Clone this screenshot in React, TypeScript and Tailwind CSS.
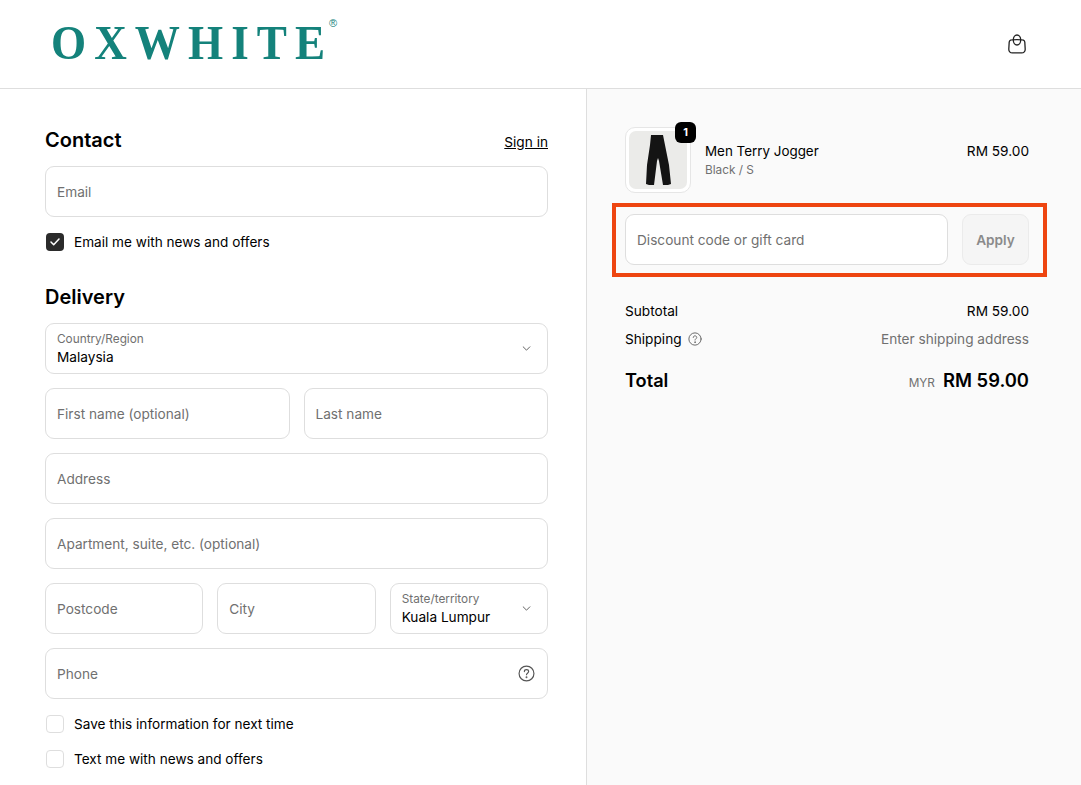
import React from "react";

const Help = ({ size, color }: { size: number; color: string }) => (
  <svg width={size} height={size} viewBox="0 0 16 16" fill="none" stroke={color} strokeWidth="1.1" strokeLinecap="round" strokeLinejoin="round">
    <circle cx="8" cy="8" r="7" />
    <path d="M6 6.2c0-1.1.9-1.8 2-1.8s2 .8 2 1.8c0 1.5-2 1.6-2 3" />
    <circle cx="8" cy="11.6" r="0.35" fill={color} />
  </svg>
);

const Chevron = () => (
  <svg width="9" height="5" viewBox="0 0 10 6" fill="none" stroke="#555" strokeWidth="1.1" strokeLinecap="round" strokeLinejoin="round" className="mr-[1px]">
    <path d="M1 1l4 4 4-4" />
  </svg>
);

const Field = ({ label, className = "", right }: { label: string; className?: string; right?: React.ReactNode }) => (
  <div className={`h-[51px] rounded-[9px] border border-[#dedede] bg-white px-[11px] flex items-center justify-between text-[13.65px] text-[#707070] ${className}`}>
    <span className="pt-[2px]">{label}</span>
    {right}
  </div>
);

const Select = ({ label, value, className = "" }: { label: string; value: string; className?: string }) => (
  <div className={`h-[51px] rounded-[9px] border border-[#dedede] bg-white pl-[11px] pr-[15px] flex items-center justify-between ${className}`}>
    <div className="flex flex-col">
      <span className="text-[11.8px] leading-[16px] text-[#707070]">{label}</span>
      <span className="text-[13.65px] leading-[19px] mt-[1px] text-black">{value}</span>
    </div>
    <Chevron />
  </div>
);

const Check = ({ label, checked = false }: { label: string; checked?: boolean }) => (
  <div className="flex items-center gap-[10px] h-[18px] pl-[1px] text-[13.6px] text-black">
    {checked ? (
      <span className="w-[18px] h-[18px] rounded-[4px] bg-[#2b2b2b] flex items-center justify-center">
        <svg width="10" height="8" viewBox="0 0 10 8" fill="none" stroke="#fff" strokeWidth="1.5" strokeLinecap="round" strokeLinejoin="round">
          <path d="M1 4l2.7 2.7L9 1" />
        </svg>
      </span>
    ) : (
      <span className="w-[18px] h-[18px] rounded-[4px] border border-[#dedede] bg-white" />
    )}
    <span>{label}</span>
  </div>
);

export default function App() {
  return (
    <div className="w-[1081px] h-[785px] overflow-hidden bg-white flex flex-col font-['Inter',sans-serif] text-black">
      <header className="h-[89px] shrink-0 border-b border-[#dedede] flex items-center justify-between pl-[51px] pr-[53px]">
        <div className="relative w-[288px] h-[50px] -mt-[2px]">
          <span className="block origin-left scale-x-[0.94] whitespace-nowrap font-['Liberation_Serif',serif] font-bold text-[48px] leading-[50px] tracking-[8.6px] text-[#14827b]">
            OXWHIT<span className="tracking-normal">E</span>
          </span>
          <span className="absolute left-[278px] top-[-2px] text-[11px] leading-[14px] text-[#14827b] font-['Liberation_Sans',sans-serif]">®</span>
        </div>
        <svg width="22" height="22" viewBox="0 0 22 22" fill="none" stroke="#222" strokeWidth="1.3" className="mt-[-1px]">
          <path d="M4.6 7.2c-.8.3-1.3 1-1.4 1.9L2.8 16c-.1 2.300 1.300 3.900 3.600 3.900h9.200c2.300 0 3.700-1.600 3.600-3.900l-.4-6.900c-.1-.9-.6-1.600-1.400-1.900C15.500 6.500 6.500 6.500 4.600 7.200z" />
          <ellipse cx="11" cy="7" rx="3.700" ry="5" />
        </svg>
      </header>
      <div className="flex flex-1 min-h-0">
        <main className="w-[587px] shrink-0 border-r border-[#dedede] pl-[45px] pr-[38px] pt-[38px]">
          <div className="flex items-center justify-between h-[27px]">
            <h2 className="text-[20px] leading-[27px] font-semibold">Contact</h2>
            <a className="text-[13.65px] leading-[20px] underline mt-[3px]">Sign in</a>
          </div>
          <Field label="Email" className="mt-[12px]" />
          <div className="mt-[16px]">
            <Check label="Email me with news and offers" checked />
          </div>
          <h2 className="text-[20px] leading-[27px] font-semibold mt-[33px]">Delivery</h2>
          <div className="mt-[12px] flex flex-col gap-[14px]">
            <Select label="Country/Region" value="Malaysia" />
            <div className="grid grid-cols-2 gap-[14px]">
              <Field label="First name (optional)" />
              <Field label="Last name" />
            </div>
            <Field label="Address" />
            <Field label="Apartment, suite, etc. (optional)" />
            <div className="grid grid-cols-3 gap-[14px]">
              <Field label="Postcode" />
              <Field label="City" />
              <Select label="State/territory" value="Kuala Lumpur" />
            </div>
            <Field label="Phone" className="pr-[12px]" right={<Help size={17} color="#555" />} />
          </div>
          <div className="mt-[16px] flex flex-col gap-[17px]">
            <Check label="Save this information for next time" />
            <Check label="Text me with news and offers" />
          </div>
        </main>
        <aside className="flex-1 bg-[#fafafa] pl-[38px] pr-[52px] pt-[38px]">
          <div className="flex items-center h-[66px]">
            <div className="relative w-[66px] h-[66px] rounded-[10px] border border-[#e6e6e6] bg-white p-[3px]">
              <div className="w-full h-full rounded-[7px] bg-[#ebebe9] flex items-center justify-center overflow-hidden">
                <svg width="34" height="56" viewBox="0 0 34 56" fill="#141414" className="blur-[0.7px]">
                  <path d="M10 3h12l2 10 4 20 2 19-3 1h-5l-4-24-1-3-1 3-3 24H8l-3-1 1-19 3-20z" />
                </svg>
              </div>
              <span className="absolute -top-[6px] -right-[6px] w-[21px] h-[21px] rounded-[6px] bg-black text-white text-[11px] font-bold flex items-center justify-center">1</span>
            </div>
            <div className="ml-[14px] flex flex-col">
              <span className="text-[13.4px] leading-[19px]">Men Terry Jogger</span>
              <span className="text-[11.8px] leading-[18px] text-[#707070]">Black / S</span>
            </div>
            <span className="ml-auto text-[13.65px] leading-[20px] mb-[19px]">RM 59.00</span>
          </div>
          <div className="mt-[10px] -ml-[13px] -mr-[18px] border-[4px] border-[#ee4510] pl-[9px] pr-[14px] pt-[7px] pb-[8px] flex gap-[14px]">
            <div className="flex-1 h-[51px] rounded-[9px] border border-[#dedede] bg-white px-[11px] pt-[2px] flex items-center text-[13.65px] text-[#707070]">
              Discount code or gift card
            </div>
            <div className="w-[67px] h-[51px] rounded-[9px] border border-[#ebebeb] bg-[#f5f5f5] pt-[2px] flex items-center justify-center text-[13.65px] font-semibold text-[#8a8a8a]">
              Apply
            </div>
          </div>
          <div className="mt-[24px] flex items-center justify-between text-[13.65px] leading-[20px]">
            <span>Subtotal</span>
            <span>RM 59.00</span>
          </div>
          <div className="mt-[8px] flex items-center justify-between text-[13.65px] leading-[20px]">
            <span className="flex items-center gap-[6px]">
              Shipping <Help size={14} color="#666" />
            </span>
            <span className="text-[#707070]">Enter shipping address</span>
          </div>
          <div className="mt-[17px] flex items-center justify-between">
            <span className="text-[18.2px] leading-[28px] font-semibold">Total</span>
            <span className="flex items-baseline gap-[8px]">
              <span className="text-[11.8px] text-[#707070]">MYR</span>
              <span className="text-[18.4px] leading-[28px] font-semibold">RM 59.00</span>
            </span>
          </div>
        </aside>
      </div>
    </div>
  );
}
